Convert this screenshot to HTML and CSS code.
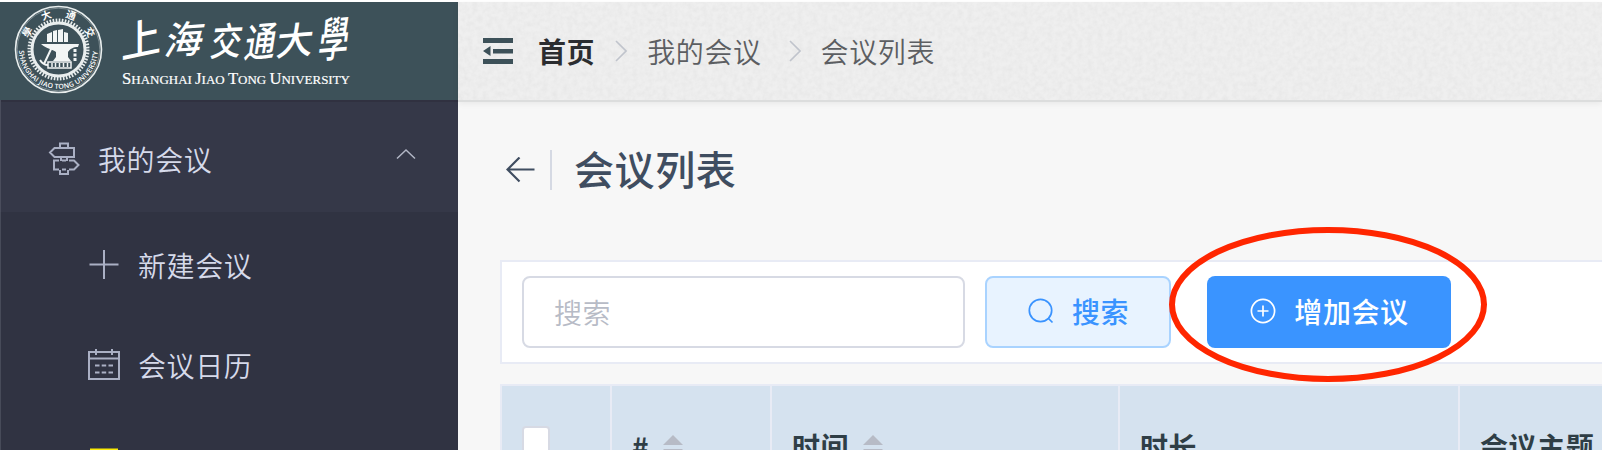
FILE: index.html
```html
<!DOCTYPE html>
<html lang="zh-CN">
<head>
<meta charset="utf-8">
<title>会议列表</title>
<link rel="stylesheet" href="styles.css">
</head>
<body>
<div class="app">
  <aside class="sidebar">
    <div class="brand">
      <svg class="brand-logo" width="458" height="98" viewBox="0 2 458 98">
        <defs>
          <path id="seal-bottom" d="M19 49.500A39.500 39.500 0 0 0 98 49.500"/>
        </defs>
        <g fill="none" stroke="#e9eeee">
          <circle cx="58.500" cy="49.500" r="43" stroke-width="1.600"/>
          <circle cx="58.500" cy="49.500" r="41.300" stroke-width=".7" opacity=".5"/>
          <circle cx="58.500" cy="49.500" r="29.300" stroke-width="3.400" stroke-dasharray="1.600 1.468"/>
          <circle cx="58.500" cy="49.500" r="26.500" stroke-width="3"/>
        </g>
        <g fill="#f2f5f5">
          <path d="M41 44h38l-1 3c-5 0-8 2-10 5v5l3 4H53l3-4v-5c-4-3-9-3-15-8z"/>
          <path d="M47 42V34l5-2v10zM53 42V31l4-1v12zM58 42V30l5-1v13zM64 42V32l4 1v9z"/>
          <path d="M48 62h23v6H48z" fill="none" stroke="#f2f5f5" stroke-width="1.500"/>
          <path d="M52 63v4M55.500 63v4M59.500 63v4M63.500 63v4M67.500 63v4" stroke="#f2f5f5" stroke-width="1.500"/>
          <path d="M52 47L44 64M40 60q3 5 8 5" fill="none" stroke="#f2f5f5" stroke-width="2"/>
          <path d="M75 49v13" fill="none" stroke="#f2f5f5" stroke-width="3" stroke-dasharray="3 1.500"/>
        </g>
        <g class="seal-cn">
          <text transform="translate(27 32) rotate(-60)" y="4">學</text>
          <text transform="translate(46 15) rotate(-20)" y="4">大</text>
          <text transform="translate(71 15) rotate(20)" y="4">通</text>
          <text transform="translate(90 32) rotate(60)" y="4">交</text>
        </g>
        <text class="seal-en"><textPath href="#seal-bottom" startOffset="1" textLength="121" lengthAdjust="spacing">SHANGHAI JIAO TONG UNIVERSITY</textPath></text>
        <g class="brand-cn">
          <text transform="translate(121 59) rotate(-12) skewX(-12)" font-size="41">上</text>
          <text transform="translate(163 55) rotate(-4) skewX(-16)" font-size="38">海</text>
          <text transform="translate(209 56) rotate(-3) skewX(-12) scale(.82 1)" font-size="38">交</text>
          <text transform="translate(243 58) rotate(-5) skewX(-14) scale(.78 1)" font-size="40">通</text>
          <text transform="translate(275 56) rotate(-5) skewX(-12)" font-size="37">大</text>
          <text transform="translate(317 58) rotate(-5) skewX(-12) scale(.74 1.150)" font-size="41">學</text>
        </g>
        <text class="brand-en" x="122" y="84" textLength="228" lengthAdjust="spacingAndGlyphs"><tspan class="cap">S</tspan>HANGHAI <tspan class="cap">J</tspan>IAO <tspan class="cap">T</tspan>ONG <tspan class="cap">U</tspan>NIVERSITY</text>
      </svg>
    </div>
    <div class="menu-title">
      <svg class="menu-icon" width="32" height="34" viewBox="0 0 32 34">
        <g fill="none" stroke="#aab0c4" stroke-width="2">
          <path d="M12 6V1.500h8V6M6.500 6H26v9H6.500L2 10.500z"/>
          <path d="M13 15v4M19 15v4"/>
          <path d="M11 18.500H6v9h5M14 18.500h4M21 18.500h5l4.500 4.500-4.500 4.500h-5M14 27.500h4"/>
          <path d="M12 28v4h8v-4"/>
        </g>
      </svg>
      <span>我的会议</span>
      <svg class="menu-caret" width="20" height="12" viewBox="0 0 20 12"><path d="M1 10.500L10 2l9 8.500" fill="none" stroke="#b2b6c5" stroke-width="1.500"/></svg>
    </div>
    <div class="submenu">
      <div class="menu-item">
        <svg class="menu-icon" width="32" height="34" viewBox="0 0 32 34"><path d="M16 2v29M1.500 16.500h29" stroke="#aab0c4" stroke-width="2"/></svg>
        <span>新建会议</span>
      </div>
      <div class="menu-item">
        <svg class="menu-icon" width="32" height="34" viewBox="0 0 32 34"><path d="M1 4h30v27H1zM1 10.500h30M8 1v6M24 1v6" fill="none" stroke="#aab0c4" stroke-width="2"/><path d="M7 17.500h4.500M13.700 17.500h4.500M20.500 17.500H25M7 24.500h4.500M13.700 24.500h4.500M20.500 24.500H25" stroke="#aab0c4" stroke-width="2.200"/></svg>
        <span>会议日历</span>
      </div>
      <div class="menu-item">
        <svg class="menu-icon" width="32" height="34" viewBox="0 0 32 34"><path d="M3 1.500h26v31H3z" fill="none" stroke="#fbec05" stroke-width="2"/></svg>
      </div>
    </div>
  </aside>

  <div class="page">
    <header class="topbar">
      <svg class="texture" width="100%" height="100%">
        <filter id="grain" x="0" y="0" width="100%" height="100%" color-interpolation-filters="sRGB">
          <feTurbulence type="fractalNoise" baseFrequency=".2" numOctaves="3" seed="4"/>
          <feColorMatrix values="0 0 0 0 .3  0 0 0 0 .3  0 0 0 0 .3  .08 0 0 0 -.025"/>
        </filter>
        <rect width="100%" height="100%" filter="url(#grain)"/>
      </svg>
      <svg class="fold" width="30" height="26" viewBox="0 0 30 26"><path d="M0 0h30v5H0zM10 11h20v4.500H10zM0 21h30v5H0zM0 13l7.500-5v10z" fill="#3d5159"/></svg>
      <nav class="crumbs">
        <b>首页</b>
        <svg width="12" height="22" viewBox="0 0 12 22"><path d="M1 1l10 10L1 21" fill="none" stroke="#c0c4cc" stroke-width="1.600"/></svg>
        <span class="crumb-mid">我的会议</span>
        <svg width="12" height="22" viewBox="0 0 12 22"><path d="M1 1l10 10L1 21" fill="none" stroke="#c0c4cc" stroke-width="1.600"/></svg>
        <span>会议列表</span>
      </nav>
    </header>

    <main class="content">
      <div class="heading">
        <svg width="30" height="26" viewBox="0 0 30 26"><path d="M13.500 .5L1.500 12.500l12 12M1.500 12.500h27" fill="none" stroke="#3f4d60" stroke-width="2.200"/></svg>
        <h1><span>会议列表</span></h1>
      </div>

      <div class="toolbar">
        <input class="search-input" type="text" placeholder="搜索">
        <button class="btn btn-plain">
          <svg width="26" height="26" viewBox="0 0 26 26"><g fill="none" stroke="#3a93ff" stroke-width="1.700"><circle cx="12.500" cy="12.500" r="11.200"/><path d="M20 20l4.500 4.500"/></g></svg>
          <span>搜索</span>
        </button>
        <div class="primary-wrap">
          <button class="btn btn-primary">
            <svg width="26" height="26" viewBox="0 0 26 26"><g fill="none" stroke="#fff" stroke-width="1.700"><circle cx="13" cy="13" r="11.600"/><path d="M13 7.500v11M7.500 13h11"/></g></svg>
            <span>增加会议</span>
          </button>
          <svg class="marker" width="320" height="156" viewBox="0 0 320 156"><ellipse cx="160" cy="77.500" rx="156" ry="74.500" fill="none" stroke="#ff2600" stroke-width="6"/></svg>
        </div>
      </div>

      <div class="table-head">
        <div class="cell"><i class="checkbox"></i></div>
        <div class="cell"><span>#</span><i class="sort"></i></div>
        <div class="cell"><span>时间</span><i class="sort"></i></div>
        <div class="cell"><span>时长</span></div>
        <div class="cell"><span>会议主题</span></div>
      </div>
    </main>
  </div>
</div>
</body>
</html>
```
FILE: styles.css
```css
* { box-sizing: border-box; }
body {
  margin: 0;
  background: #fff;
  font-family: "Noto Sans CJK SC", sans-serif;
  font-size: 28px;
  line-height: 40px;
  letter-spacing: .6px;
}
svg { display: block; flex: none; }

.app {
  display: flex;
  height: 450px;
  padding-top: 2px;
  overflow: hidden;
}

/* Sidebar */
.sidebar {
  flex: none;
  width: 458px;
  height: 448px;
  overflow: hidden;
  background: #303342;
  color: #d6daea;
  font-weight: 350;
  box-shadow: inset 1px 0 #474b59;
}
.brand { height: 98px; background: #3d5159; }
.brand-cn, .brand-en, .seal-cn, .seal-en { fill: #fff; letter-spacing: 0; }
.brand-cn { font-weight: 500; }
.brand-en { font: 12.500px "Liberation Serif", serif; stroke: #fff; stroke-width: .2px; }
.brand-en .cap { font-size: 16px; }
.seal-cn { font-size: 10px; font-weight: 700; text-anchor: middle; }
.seal-en { font: 600 7px "Open Sans", sans-serif; }
.menu-title {
  display: flex;
  align-items: center;
  height: 112px;
  padding: 6px 42px 0 48px;
  background: #353848;
  box-shadow: inset 1px 0 #4a4d5c, inset 0 2px #303140;
}
.menu-icon { margin-right: 18px; }
.menu-title .menu-icon { margin-top: -1px; }
.menu-caret { margin: -10px 0 0 auto; }
.submenu { padding-top: 3px; }
.menu-item {
  display: flex;
  align-items: center;
  height: 100px;
  padding-left: 88px;
}

/* Top bar */
.page {
  flex: 1;
  min-width: 0;
  background: #f7f7f7;
}
.topbar {
  position: relative;
  display: flex;
  align-items: center;
  height: 100px;
  padding-left: 25px;
  background: #efefef;
  border-bottom: 2px solid #dcdddd;
  box-shadow: 0 2px 6px rgba(0, 0, 0, .06);
}
.texture { position: absolute; inset: 0; }
.fold { position: relative; }
.crumbs {
  position: relative;
  display: flex;
  align-items: center;
  margin-left: 25px;
  color: #5c5e62;
  font-weight: 350;
}
.crumbs b { color: #2b2d30; font-weight: 700; }
.crumbs svg { margin: 0 20px 0 20px; }
.crumb-mid { margin-right: 7px; }

/* Content */
.content { padding-left: 42px; }
.heading {
  display: flex;
  align-items: center;
  height: 158px;
  padding: 0 0 23px 6px;
  color: #3f4d60;
}
.heading h1 {
  display: flex;
  align-items: center;
  height: 40px;
  margin: 0 0 0 14px;
  padding-left: 22px;
  border-left: 2px solid #d5d9e3;
  font-size: 40px;
  font-weight: 500;
}
.heading h1 span { margin-top: -4px; }
.toolbar {
  display: flex;
  height: 104px;
  padding: 14px 20px;
  background: #fff;
  border: 2px solid #e8ebf5;
  border-right: 0;
}
.search-input {
  width: 443px;
  height: 72px;
  padding: 0 30px;
  border: 2px solid #d7dae4;
  border-radius: 8px;
  font: inherit;
  font-weight: 350;
  letter-spacing: inherit;
}
.search-input::placeholder { color: #b7bbc6; opacity: 1; }
.btn {
  display: flex;
  align-items: center;
  justify-content: center;
  height: 72px;
  padding: 0;
  gap: 18px;
  border-radius: 8px;
  font: inherit;
  font-weight: 500;
  letter-spacing: inherit;
}
.btn-plain {
  width: 186px;
  margin-left: 20px;
  padding-left: 1px;
  color: #3a93ff;
  background: #e8f3ff;
  border: 2px solid #a9d3ff;
}
.btn span, .btn svg { margin-top: -2px; }
.primary-wrap { position: relative; margin-left: 36px; }
.btn-primary { width: 244px; padding-left: 1px; color: #fff; background: #3a94ff; border: 0; }
.marker { position: absolute; left: -39px; top: -49px; z-index: 1; }

/* Table */
.table-head {
  display: grid;
  grid-template-columns: 110px 160px 348px 340px 1fr;
  height: 122px;
  margin-top: 20px;
  border: 2px solid #e8ebf5;
  border-right: 0;
  background: #d5e2ef;
  color: #2f3e46;
  font-weight: 700;
}
.cell {
  display: flex;
  align-items: center;
  padding: 2px 0 0 20px;
  border-right: 2px solid #e8ebf5;
  white-space: nowrap;
}
.cell:last-child { border-right: 0; }
.checkbox {
  width: 28px;
  height: 28px;
  margin-top: -12px;
  background: #fff;
  border: 2px solid #d7dae4;
  border-radius: 4px;
}
.sort {
  display: flex;
  flex-direction: column;
  gap: 4px;
  margin: 1px 0 0 14px;
}
.sort::before, .sort::after {
  content: "";
  border: 10px solid transparent;
}
.sort::before { border-top: 0; border-bottom-color: #b7bbc6; }
.sort::after { border-bottom: 0; border-top-color: #b7bbc6; }
```
